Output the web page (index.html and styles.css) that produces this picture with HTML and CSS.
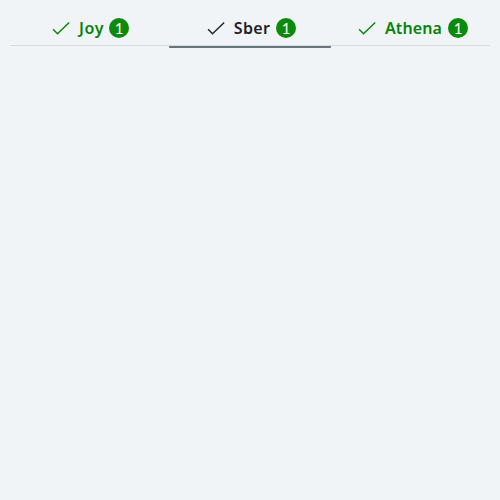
FILE: index.html
```html
<!DOCTYPE html>
<html lang="en">
<head>
<meta charset="utf-8">
<title>Tabs</title>
<link rel="stylesheet" href="styles.css">
</head>
<body>
<nav class="tabs" role="tablist">
  <button class="tab tab-first" role="tab"><svg class="check" viewBox="0 0 24 24"><path d="M4.1 13.3l4.4 4.4L20.2 6.4"/></svg><span class="label label-joy">Joy</span><span class="badge">1</span></button>
  <button class="tab tab-active" role="tab" aria-selected="true"><svg class="check" viewBox="0 0 24 24"><path d="M4.1 13.3l4.4 4.4L20.2 6.4"/></svg><span class="label label-sber">Sber</span><span class="badge">1</span></button>
  <button class="tab tab-last" role="tab"><svg class="check" viewBox="0 0 24 24"><path d="M4.1 13.3l4.4 4.4L20.2 6.4"/></svg><span class="label label-athena">Athena</span><span class="badge">1</span></button>
</nav>
</body>
</html>
```
FILE: styles.css
```css
body { margin: 0; padding: 10px; background: #f0f4f7; font-family: "Noto Sans", sans-serif; }
.tabs { display: grid; grid-template-columns: 159px 162px 159px; height: 36px; box-sizing: border-box; border-bottom: 1px solid #d5dde1; }
.tab { display: flex; align-items: center; justify-content: center; height: 38px; box-sizing: border-box; padding: 0; border: 0; border-bottom: 2px solid transparent; background: none; color: #078307; font: 600 16px/24px "Noto Sans", sans-serif; }
.tab-first { padding-right: 1px; }
.tab-last { padding-left: 2px; }
.tab-active { color: #1f2328; border-color: #657579; border-radius: 1px; }
.check { width: 24px; height: 24px; margin-right: 6px; fill: none; stroke: currentColor; stroke-width: 1.4; }
.label { margin-right: 6px; }
.label-joy { letter-spacing: 0.6px; margin-right: 5px; }
.label-sber { letter-spacing: 0.3px; }
.label-athena { letter-spacing: 0.1px; }
.badge { width: 20px; height: 20px; border-radius: 50%; background: #0b8a0b; color: #fff; font: 400 15px/20px Lato, sans-serif; text-align: center; }
```
